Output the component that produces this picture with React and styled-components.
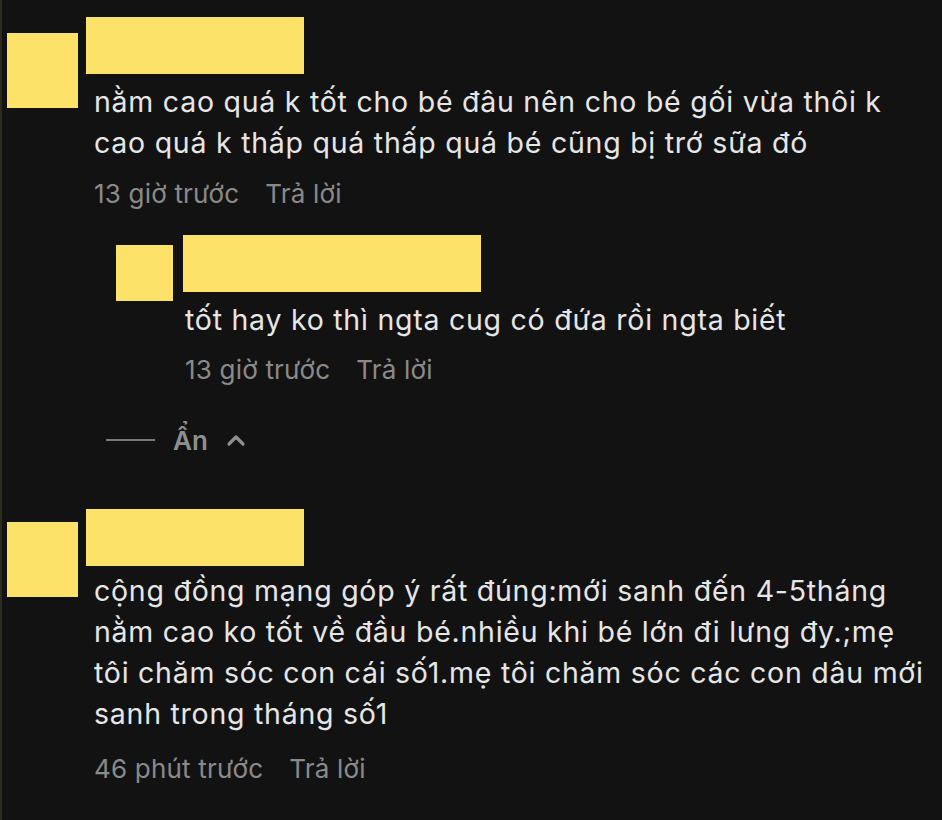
import React from 'react';
import styled, { createGlobalStyle } from 'styled-components';

const GlobalStyle = createGlobalStyle`
  html, body {
    margin: 0;
    padding: 0;
    background: #121212;
  }
  body {
    font-family: Inter, "Open Sans", "Liberation Sans", sans-serif;
  }
`;

const Page = styled.div`
  width: 942px;
  height: 820px;
  box-sizing: border-box;
  background: #121212;
  border-left: 2px solid #2e2b1c;
  padding: 17px 0 0 5px;
  overflow: hidden;
`;

const Comment = styled.div`
  display: flex;
  align-items: flex-start;
  gap: ${({ $reply }) => ($reply ? '10px' : '8px')};
  margin-left: ${({ $reply }) => ($reply ? '109px' : '0')};
  margin-top: ${({ $mt }) => $mt || '0'};
  margin-bottom: ${({ $gap }) => $gap || '0'};
`;

const Avatar = styled.div`
  flex: none;
  width: ${({ $size }) => $size}px;
  height: ${({ $h }) => $h}px;
  margin-top: ${({ $top }) => $top}px;
  background: #fde26a;
`;

const Body = styled.div`
  display: flex;
  flex-direction: column;
`;

const NameBar = styled.div`
  width: ${({ $w }) => $w}px;
  height: 57px;
  background: #fde26a;
`;

const Text = styled.div`
  padding-left: ${({ $indent }) => $indent}px;
  margin-top: ${({ $top }) => $top}px;
  color: #e6e6e6;
  font-size: 28.5px;
  line-height: 41px;
  letter-spacing: 0.75px;
  white-space: nowrap;
`;

const Meta = styled.div`
  display: flex;
  gap: 26px;
  padding-left: ${({ $indent }) => $indent}px;
  margin-top: ${({ $top }) => $top}px;
  color: #8a8a8a;
  font-size: 26px;
  line-height: 36px;
  letter-spacing: 0.2px;
`;

const HideRow = styled.div`
  display: flex;
  align-items: center;
  margin: 34px 0 0 99px;
  height: 36px;
  color: #8f8f8f;
  font-size: 26px;
  font-weight: 600;
`;

const Rule = styled.span`
  width: 49px;
  height: 2px;
  background: #7a7a7a;
  margin-right: 18px;
`;

const Caret = styled.svg`
  margin-left: 18px;
  width: 20px;
  height: 14px;
`;

const App = () => (
  <>
    <GlobalStyle />
    <Page>
      <Comment $gap="23px">
        <Avatar $size={71} $h={75} $top={16} />
        <Body>
          <NameBar $w={218} />
          <Text $indent={8} $top={7}>
            nằm cao quá k tốt cho bé đâu nên cho bé gối vừa thôi k<br />
            cao quá k thấp quá thấp quá bé cũng bị trớ sữa đó
          </Text>
          <Meta $indent={8} $top={13}>
            <span>13 giờ trước</span>
            <span>Trả lời</span>
          </Meta>
        </Body>
      </Comment>
      <Comment $reply>
        <Avatar $size={57} $h={56} $top={10} />
        <Body>
          <NameBar $w={298} />
          <Text $indent={2} $top={7}>
            tốt hay ko thì ngta cug có đứa rồi ngta biết
          </Text>
          <Meta $indent={2} $top={12}>
            <span>13 giờ trước</span>
            <span>Trả lời</span>
          </Meta>
        </Body>
      </Comment>
      <HideRow>
        <Rule />
        Ẩn
        <Caret viewBox="0 0 20 14" fill="none">
          <polyline points="3,11 10,4 17,11" stroke="#8f8f8f" strokeWidth="3.2" strokeLinecap="round" strokeLinejoin="round" />
        </Caret>
      </HideRow>
      <Comment $mt="51px">
        <Avatar $size={71} $h={75} $top={13} />
        <Body>
          <NameBar $w={218} />
          <Text $indent={8} $top={4}>
            cộng đồng mạng góp ý rất đúng:mới sanh đến 4-5tháng<br />
            nằm cao ko tốt về đầu bé.nhiều khi bé lớn đi lưng đy.;mẹ<br />
            tôi chăm sóc con cái số1.mẹ tôi chăm sóc các con dâu mới<br />
            sanh trong tháng số1
          </Text>
          <Meta $indent={8} $top={17}>
            <span>46 phút trước</span>
            <span>Trả lời</span>
          </Meta>
        </Body>
      </Comment>
    </Page>
  </>
);

export default App;
